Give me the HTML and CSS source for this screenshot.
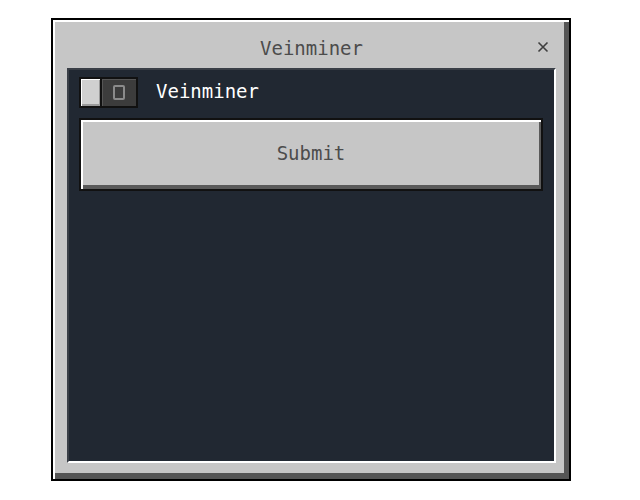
FILE: index.html
```html
<!DOCTYPE html>
<html lang="en">
<head>
    <meta charset="UTF-8">
    <title>Veinminer</title>
    <link rel="stylesheet" href="styles.css">
</head>
<body>
    <div class="window">
        <div class="titlebar">
            <span></span>
            <span class="title">Veinminer</span>
            <span class="close">
                <svg width="12" height="12" viewBox="0 0 12 12">
                    <path d="M1.5 1.5 L10.5 10.5 M10.5 1.5 L1.5 10.5" stroke="#3f3f3f" stroke-width="1.6" fill="none"/>
                </svg>
            </span>
        </div>
        <div class="panel">
            <div class="row">
                <div class="toggle">
                    <div class="knob"></div>
                    <div class="track"><div class="ring"></div></div>
                </div>
                <span class="label">Veinminer</span>
            </div>
            <button class="submit">Submit</button>
        </div>
    </div>
</body>
</html>
```

FILE: styles.css
```css
body {
    margin: 0;
    background: #fff;
    font-family: "DejaVu Sans Mono", "Liberation Mono", monospace;
}
.window {
    box-sizing: border-box;
    margin: 18px 0 0 51px;
    width: 520px;
    height: 463px;
    border: 2px solid #000;
    background: #c6c6c6;
    box-shadow: inset 2px 2px 0 #fff, inset -5px -6px 0 #555;
    padding: 0 13px 16px 14px;
    display: flex;
    flex-direction: column;
}
.titlebar {
    height: 48px;
    display: grid;
    grid-template-columns: 1fr auto 1fr;
    align-items: center;
}
.title {
    font-size: 19px;
    color: #4c4c4c;
    padding-top: 8px;
}
.close {
    justify-self: end;
    margin-right: 7px;
    padding-top: 6px;
    line-height: 0;
}
.panel {
    flex: 1;
    background: #212832;
    border-top: 2px solid #3a3f47;
    border-left: 2px solid #3a3f47;
    border-right: 2px solid #fff;
    border-bottom: 2px solid #fff;
    padding: 7px 11px 0 10px;
}
.row {
    display: flex;
    align-items: center;
    gap: 18px;
}
.toggle {
    box-sizing: border-box;
    width: 59px;
    height: 31px;
    border: 2px solid #111;
    display: flex;
    background: #3c3c3c;
}
.knob {
    width: 19px;
    background: #d0d0d0;
    border-right: 2px solid #111;
    box-shadow: inset 1px 1px 0 #fff, inset -1px -2px 0 #9a9a9a;
}
.track {
    flex: 1;
    display: flex;
    align-items: center;
    justify-content: center;
    box-shadow: inset 1px 1px 0 #555;
}
.ring {
    width: 8px;
    height: 11px;
    border: 2px solid #8b8b8b;
    border-radius: 2px;
}
.label {
    font-size: 19px;
    color: #fff;
    padding-bottom: 4px;
}
.submit {
    display: block;
    box-sizing: border-box;
    margin-top: 10px;
    width: 464px;
    height: 73px;
    border: 2px solid #111;
    background: #c6c6c6;
    box-shadow: inset 2px 2px 0 #fff, inset -2px -4px 0 #5a5a5a;
    font-family: inherit;
    font-size: 19px;
    color: #4c4c4c;
    padding: 0 0 4px 0;
}
```
